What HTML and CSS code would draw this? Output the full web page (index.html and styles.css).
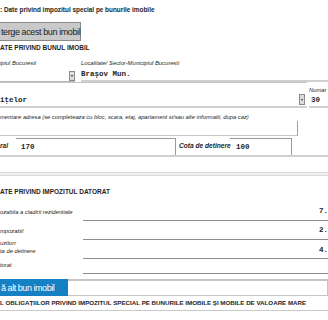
FILE: index.html
```html
<!DOCTYPE html>
<html lang="ro">
<head>
    <meta charset="UTF-8">
    <meta name="viewport" content="width=device-width, initial-scale=1.0">
    <title>Bunuri imobile</title>
    <link rel="stylesheet" href="styles.css">
</head>
<body>
    <div class="page">
        <div class="title">: Date privind impozitul special pe bunurile imobile</div>
        <button class="btn-delete">terge acest bun imobil</button>

        <h2 class="section-title first">ATE PRIVIND BUNUL IMOBIL</h2>
        <div class="grid-city labels">
            <span class="lbl">ipiul Bucuresti</span>
            <span class="lbl">Localitate/ Sector-Municipiul Bucuresti</span>
        </div>
        <div class="grid-city fields">
            <div class="field select-field"><span class="arrow"></span></div>
            <div class="field city"><span class="val">Braşov Mun.</span></div>
        </div>

        <div class="grid-street">
            <div class="field street">
                <span class="val">iţelor</span>
                <span class="arrow tall"></span>
            </div>
            <div class="number">
                <span class="lbl">Numar</span>
                <div class="field num"><span class="val">30</span></div>
            </div>
        </div>

        <div class="lbl note">mentare adresa (se completeaza cu bloc, scara, etaj, apartament si/sau alte informatii, dupa caz)</div>
        <div class="textarea"></div>

        <div class="row-area">
            <span class="lbl strong">ral</span>
            <div class="field box area"><span class="val">170</span></div>
            <span class="lbl strong share">Cota de detinere</span>
            <div class="field box quota"><span class="val">100</span></div>
        </div>

        <div class="separator"></div>

        <h2 class="section-title second">ATE PRIVIND IMPOZITUL DATORAT</h2>
        <div class="tax-list">
            <div class="tax-row first-row">
                <span class="lbl">ozabila a cladirii rezidentiale</span>
                <span class="tax-val">7.</span>
            </div>
            <div class="tax-row">
                <span class="lbl">mpozabil</span>
                <span class="tax-val">2.</span>
            </div>
            <div class="tax-row double">
                <span class="lbl">uzitorr<br>ta de detinere</span>
                <span class="tax-val">4.</span>
            </div>
            <div class="tax-row short">
                <span class="lbl">torat</span>
                <span class="tax-val"></span>
            </div>
        </div>

        <div class="add-row">
            <button class="btn-add">ă alt bun imobil</button>
            <div class="add-space"></div>
        </div>

        <h2 class="section-title last">L OBLIGAŢIILOR PRIVIND IMPOZITUL SPECIAL PE BUNURILE IMOBILE ŞI MOBILE DE VALOARE MARE</h2>
        <div class="bottom-line"></div>
    </div>
</body>
</html>
```

FILE: styles.css
```css
body {
    margin: 0;
    width: 328px;
    height: 320px;
    overflow: hidden;
    background: #fff;
    color: #1e1e1e;
    font-family: "Liberation Sans", Arial, sans-serif;
}
.page {
    padding-top: 6px;
}
.title {
    font-size: 6.4px;
    font-weight: bold;
    line-height: 8px;
    height: 8px;
    white-space: nowrap;
}
.btn-delete {
    display: block;
    margin: 8px 0 0;
    width: 81px;
    height: 19px;
    padding: 0 0 0 1px;
    border: 1px solid #8a8a8a;
    border-left: none;
    background: #c9c9c9;
    color: #222;
    font-family: "Liberation Sans", Arial, sans-serif;
    font-size: 9px;
    letter-spacing: -0.4px;
    text-align: left;
    white-space: nowrap;
}
.section-title {
    margin: 3px 0 0;
    font-size: 6.5px;
    font-weight: bold;
    line-height: 8px;
    white-space: nowrap;
}
.lbl {
    font-size: 5.8px;
    font-style: italic;
    line-height: 8px;
    white-space: nowrap;
}
.lbl.strong {
    font-weight: bold;
    font-size: 6.6px;
}
.val {
    font-family: "Liberation Mono", "Courier New", monospace;
    font-size: 7.5px;
    font-weight: bold;
    line-height: 9px;
    white-space: nowrap;
}

/* adresa */
.grid-city {
    display: grid;
    grid-template-columns: 81px 1fr;
}
.labels {
    margin-top: 7px;
}
.fields {
    height: 15px;
    align-items: end;
}
.field {
    box-sizing: border-box;
    display: flex;
    align-items: flex-end;
}
.select-field {
    width: 75px;
    height: 14px;
    justify-content: flex-end;
    border-bottom: 1px solid #b8b8b8;
}
.city {
    height: 15px;
    padding-bottom: 1px;
    border-bottom: 2px solid #d0d0d0;
}
.arrow {
    box-sizing: border-box;
    width: 6px;
    height: 10px;
    border: 1px solid #8a8a8a;
    background: #dcdcdc;
    display: flex;
    align-items: center;
    justify-content: center;
}
.arrow::after {
    content: "";
    border-left: 1.5px solid transparent;
    border-right: 1.5px solid transparent;
    border-top: 2px solid #333;
}
.arrow.tall {
    height: 11px;
    margin-right: 2px;
}
.grid-street {
    display: grid;
    grid-template-columns: 307px 1fr;
    height: 26px;
}
.street {
    justify-content: space-between;
    border-top: 1px solid #c4c4c4;
    border-bottom: 2px solid #d0d0d0;
    padding-bottom: 1px;
}
.number {
    display: flex;
    flex-direction: column;
    padding-left: 2px;
}
.number .lbl {
    margin-top: 4px;
}
.num {
    flex: 1;
    padding: 0 0 1px 2px;
    border-bottom: 2px solid #d0d0d0;
}
.note {
    display: block;
    margin-top: 5px;
}
.textarea {
    box-sizing: border-box;
    width: 298px;
    height: 15px;
    border-right: 1px solid #a0a0a0;
    border-bottom: 1px solid #c4c4c4;
}
.row-area {
    box-sizing: border-box;
    display: flex;
    align-items: flex-start;
    margin-top: 2px;
    height: 19px;
    border-bottom: 2px solid #d0d0d0;
}
.row-area .lbl {
    padding-top: 4px;
}
.box {
    flex: none;
    height: 17px;
    align-items: center;
    border-top: 1px solid #9a9a9a;
    border-right: 1px solid #9a9a9a;
}
.area {
    width: 160px;
    margin-left: 8px;
    padding-left: 5px;
}
.share {
    width: 54px;
    padding-left: 3px;
    box-sizing: border-box;
    flex: none;
}
.quota {
    width: 62px;
    padding-left: 6px;
}
.separator {
    margin-top: 15px;
    height: 2px;
    border-top: 1px solid #dadada;
    border-bottom: 1px solid #dadada;
    background: #f2f2f2;
}
.section-title.second {
    margin-top: 12px;
}

/* impozit */
.tax-row {
    display: grid;
    grid-template-columns: 83px 1fr;
    align-items: end;
    height: 19px;
}
.tax-row.first-row {
    height: 25px;
}
.tax-row .lbl {
    padding-bottom: 5px;
}
.tax-val {
    box-sizing: border-box;
    display: flex;
    align-items: flex-end;
    justify-content: flex-end;
    height: 18px;
    padding-bottom: 4px;
    border-bottom: 1px solid #8e8e8e;
    font-family: "Liberation Mono", "Courier New", monospace;
    font-size: 7.5px;
    font-weight: bold;
    line-height: 9px;
}
.tax-row.double .lbl {
    line-height: 7.5px;
    padding-bottom: 4px;
}
.tax-row.double .tax-val {
    padding-bottom: 3px;
}
.tax-row.short {
    height: 15px;
}
.tax-row.short .tax-val {
    height: 14px;
}
.add-row {
    display: flex;
    margin-top: 5px;
    height: 17px;
}
.btn-add {
    width: 68px;
    height: 17px;
    margin: 0;
    padding: 0 0 0 1px;
    border: none;
    background: #1580c4;
    color: #fff;
    font-family: "Liberation Sans", Arial, sans-serif;
    font-size: 9px;
    letter-spacing: -0.45px;
    text-align: left;
    white-space: nowrap;
}
.add-space {
    flex: 1;
    box-sizing: border-box;
    border: 1px solid #c4c4c4;
    border-left: none;
    border-top: 2px solid #c4c4c4;
}
.section-title.last {
    margin-top: 3px;
    font-size: 6.2px;
}
.bottom-line {
    margin-top: 3px;
    border-top: 1px solid #c8c8c8;
}
```
